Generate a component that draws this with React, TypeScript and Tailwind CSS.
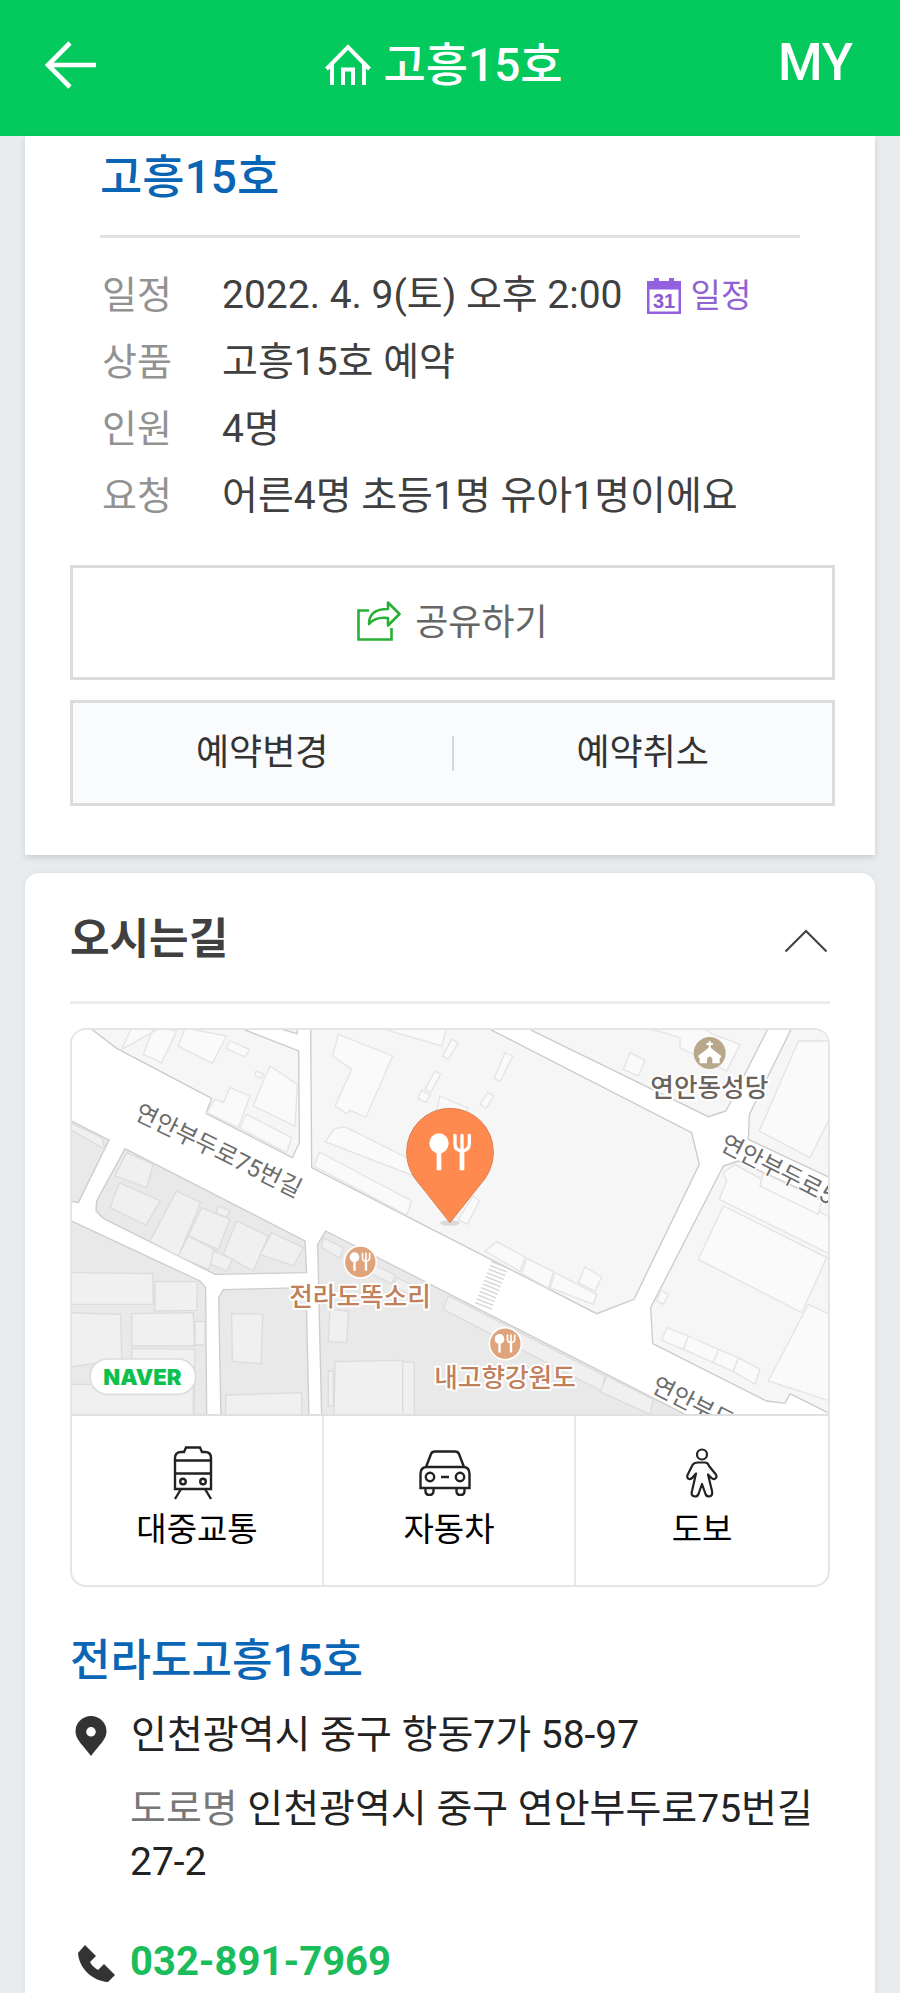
import type { ReactNode } from 'react';

interface DetailRowProps {
  label: string;
  children: ReactNode;
}

function DetailRow({ label, children }: DetailRowProps) {
  return (
    <div className="flex items-center leading-[67px]">
      <dt className="w-[122px] shrink-0 pl-[2px] text-[38px] text-[#929292]">{label}</dt>
      <dd className="flex items-center text-[39px] text-[#404040]">{children}</dd>
    </div>
  );
}

function BackIcon() {
  return (
    <svg viewBox="0 0 52 48" className="h-12 w-[52px]" fill="none" stroke="currentColor" strokeWidth="4.600">
      <path d="M3 24H51M25 2L3 24L25 46" />
    </svg>
  );
}

function HomeIcon() {
  return (
    <svg viewBox="0 0 46 42" className="h-[42px] w-[46px]" fill="none" stroke="currentColor" strokeWidth="4">
      <path d="M1.500 25L23 3L44.500 25M7 20V41M39 20V41M18 41V25.500H28V41" />
    </svg>
  );
}

function CalendarIcon() {
  return (
    <svg viewBox="0 0 34 36" className="h-9 w-[34px]">
      <path d="M0 3H7V0H12V3H22V0H27V3H34V36H0Z" fill="#9360e0" />
      <path d="M2.500 11.500H31.500V33.500H2.500Z" fill="#fff" />
      <text x="17" y="30" textAnchor="middle" fontFamily="Liberation Sans, sans-serif" fontSize="20" fontWeight="700" fill="#8a5ad0">
        31
      </text>
    </svg>
  );
}

function ShareIcon() {
  return (
    <svg viewBox="0 0 44 40" className="mb-1 h-10 w-11" fill="none" stroke="#27b035" strokeWidth="2.600">
      <path d="M12 9.500H1.500V38.500H34.500V27" />
      <path d="M12 23C12 13 18 8 31 8V1.500L42.500 13L31 24.500V17C22 16 16 18 12 23Z" strokeLinejoin="round" />
    </svg>
  );
}

function TrainIcon() {
  return (
    <svg viewBox="0 0 40 54" className="mr-2 h-[54px] w-10" fill="none" stroke="#222" strokeWidth="2.400">
      <path d="M2 43V12Q2 6 8 6H11L13 1.500H27L29 6H32Q38 6 38 12V43Z" />
      <path d="M2 14.500H38M2 27.500H38M8 43L2 53M32 43L38 53" />
      <circle cx="10" cy="35.500" r="2.800" />
      <circle cx="30" cy="35.500" r="2.800" />
    </svg>
  );
}

function CarIcon() {
  return (
    <svg viewBox="0 0 52 46" className="mr-2 h-[46px] w-[52px]" fill="none" stroke="#222" strokeWidth="2.400">
      <path d="M7 17L12 4Q13 1.500 16 1.500H36Q39 1.500 40 4L45 17" />
      <path d="M1.500 38V24Q1.500 17 8 17H44Q50.500 17 50.500 24V38Z" />
      <circle cx="11" cy="27" r="4.200" />
      <circle cx="41" cy="27" r="4.200" />
      <path d="M22 27H30M6.500 38V41Q6.500 45 10.500 45T14.500 41V38M37.500 38V41Q37.500 45 41.500 45T45.500 41V38" />
    </svg>
  );
}

function WalkIcon() {
  return (
    <svg viewBox="0 0 32 50" className="h-[50px] w-8" fill="none" stroke="#222" strokeWidth="2.200" strokeLinejoin="round">
      <circle cx="16" cy="6.500" r="5" />
      <path d="M12 14.500H19Q22 14.500 23 18L29.500 26Q32 29.500 28.500 31Q27 31.500 25.500 30L22 26.500L26 43Q27 48 23 48.500Q20.500 48.500 19.500 46L16 36L12.500 46Q11.500 48.500 9 48.500Q4.500 48 6 43L10 25.500L7 29Q5 31.500 3 31Q0.500 30 1.500 27L6.500 17Q8 14.500 12 14.500Z" />
    </svg>
  );
}

function PinIcon() {
  return (
    <svg viewBox="0 0 32 40" className="h-10 w-8" fill="#333">
      <path fillRule="evenodd" d="M16 0A15.500 15.500 0 0 1 31.500 15.500C31.500 24 23 30 16 40C9 30 .5 24 .5 15.500A15.500 15.500 0 0 1 16 0ZM16 11A4.800 4.800 0 1 0 16 20.600A4.800 4.800 0 1 0 16 11Z" />
    </svg>
  );
}

function PhoneIcon() {
  return (
    <svg viewBox="0 0 37 37" className="mt-1 h-[37px] w-[37px]" fill="#333">
      <path d="M0 8L7 0L18 11L12 17C14 21 17 23 20 25L26 19L37 30L30 37C14 36 1 23 0 8Z" />
    </svg>
  );
}

function Cutlery({ x, y, scale }: { x: number; y: number; scale: number }) {
  return (
    <g transform={`translate(${x} ${y}) scale(${scale})`} fill="none" stroke="#fff" strokeLinecap="round">
      <ellipse cx="-33" cy="-28" rx="29" ry="30" fill="#fff" stroke="none" />
      <path d="M-33 0V53" strokeWidth="14" strokeLinecap="butt" />
      <path d="M15 -52V-26Q15 -6 36 -6T58 -26V-52M36 -52V-6" strokeWidth="10" />
      <path d="M36 -10V53" strokeWidth="14" strokeLinecap="butt" />
    </g>
  );
}

const lots = [
  '90,21 170,82 455,232 438,277 697,410 718,365 716,90 540,21',
  '650,21 712,38 712,21',
  '752,21 755,440 1140,637 1610,878 1722,835 1918,430 1895,335 1282,21',
  '1400,21 1945,287 1998,270 2125,21',
  '2195,21 2068,280 2065,355 2310,470 2310,21',
  '2035,420 1990,435 1772,860 1778,968 2120,1140 2175,1147 2190,1118 2310,1178 2310,545',
];

const darkLots = [
  '30,298 147,357 55,545 30,540',
  '195,383 735,660 740,755 465,760 130,592 108,570 110,540',
  '30,598 420,780 437,800 440,1190 30,1190',
  '490,806 738,800 747,1190 483,1190 476,830',
  '797,630 1895,1190 785,1190 773,670',
];

const buildings = [
  '185,85 215,21 280,21 250,100 305,125 350,30 300,21',
  '355,75 375,21 500,45 457,127',
  '510,60 568,85 555,108 498,82',
  '510,200 570,225 535,320 440,275 465,235 490,245',
  '630,135 712,190 705,315 580,255 610,180',
  '560,280 695,350 680,395 540,322',
  '588,150 610,160 602,172 585,162',
  '835,40 998,105 918,288 870,268 860,278 825,255 875,145 818,105',
  '1125,150 1142,160 1112,215 1095,205',
  '1085,208 1110,222 1098,244 1073,232',
  '1175,55 1195,65 1165,115 1148,105',
  '1140,225 1225,262 1200,320 1125,290',
  '825,322 855,318 1100,440 1075,470 795,362',
  '778,393 1055,540 1040,582 762,435',
  '1335,95 1358,105 1320,182 1303,172',
  '1283,215 1302,225 1278,262 1260,250',
  '1240,525 1258,540 1222,610 1195,595',
  '1310,662 1395,708 1380,752 1275,690',
  '1400,712 1480,752 1465,802 1385,758',
  '1485,755 1610,820 1600,850 1470,800',
  '1575,738 1625,768 1605,810 1555,785',
  '1710,95 1755,118 1735,165 1690,145',
  '1765,21 1860,50 1860,80 2000,150 2040,70 1960,40 1930,21',
  '960,21 1145,75 1160,21',
  '2215,60 2098,330 2250,410 2310,290 2310,60',
  '2025,430 1990,455 2000,480 1978,535 2310,700 2310,590',
  '2110,455 2285,540 2275,580 2100,495',
  '1990,555 2300,710 2225,875 1915,715',
  '1803,808 1825,820 1810,850 1790,840',
  '1820,920 1885,945 1870,985 1805,958',
  '1885,945 1975,985 1960,1025 1870,985',
  '1975,985 2035,1010 2020,1052 1960,1025',
  '2035,1010 2100,1045 2085,1090 2020,1052',
  '2245,850 2310,880 2310,1140 2125,1080',
];

const darkBuildings = [
  '30,325 135,385 125,350 30,305',
  '178,485 300,540 258,612 150,560',
  '350,510 422,545 355,705 270,660',
  '425,560 510,595 475,685 385,645',
  '530,600 625,645 580,750 490,700',
  '635,635 730,680 700,735 600,700',
  '385,645 470,690 445,745 355,705',
  '460,690 518,715 500,750 452,730',
  '475,555 510,570 500,588 468,575',
  '200,395 280,430 260,500 165,465',
  '30,755 278,758 280,850 30,850',
  '285,782 412,782 410,868 285,870',
  '30,875 182,880 185,1015 30,1038',
  '215,878 400,875 403,975 215,975',
  '405,902 435,902 435,972 405,972',
  '215,982 405,985 402,1190 215,1190',
  '30,1090 400,1090 400,1190 30,1190',
  '515,878 608,880 603,1028 517,1022',
  '497,1122 725,1115 725,1190 497,1190',
  '790,650 850,680 840,712 785,680',
  '810,865 865,870 860,965 805,962',
  '825,1022 1028,1018 1028,1190 822,1190',
  '1028,1022 1063,1024 1063,1190 1028,1190',
  '805,1050 820,1050 820,1155 805,1155',
  '950,735 1005,762 995,788 935,760',
  '1010,770 1085,805 1075,835 1000,795',
  '1165,825 1635,1065 1625,1110 1150,865',
  '1640,1065 1780,1135 1770,1180 1620,1112',
];

function DirectionsMap() {
  return (
    <svg
      viewBox="36 27 2268 1152"
      className="block h-auto w-full bg-white"
      role="img"
      aria-label="전라도고흥15호 위치 지도"
      fontFamily="Roboto, 'Noto Sans CJK KR', sans-serif"
    >
      <g fill="#f6f6f6" stroke="#cbcbcb" strokeWidth="4">
        {lots.map((points) => <polygon key={points} points={points} />)}
      </g>
      <g fill="#e9e9e9" stroke="#cfcdca" strokeWidth="4">
        {darkLots.map((points) => <polygon key={points} points={points} />)}
      </g>
      <g fill="#fafafa" stroke="#e4e4e4" strokeWidth="4">
        {buildings.map((points) => <polygon key={points} points={points} />)}
      </g>
      <g fill="#f0f0f0" stroke="#dcdcdc" strokeWidth="4">
        {darkBuildings.map((points) => <polygon key={points} points={points} />)}
      </g>

      {/* crosswalk */}
      <path d="M1320 730L1268 862" stroke="#d4d4d4" strokeWidth="54" strokeDasharray="4 8" />

      <g fontSize="72" fill="#6c6c6c" stroke="#fff" strokeWidth="8" paintOrder="stroke" strokeLinejoin="round">
        <text transform="translate(220 292) rotate(26)">연안부두로75번길</text>
        <text transform="translate(1976 384) rotate(27)">연안부두로5</text>
        <text transform="translate(1770 1110) rotate(27)">연안부두</text>
      </g>

      <g fontSize="77" fontWeight="500" stroke="#fff" strokeWidth="12" paintOrder="stroke" strokeLinejoin="round" textAnchor="middle">
        <text x="900" y="854" fill="#c0805a">전라도똑소리</text>
        <text x="1335" y="1099" fill="#c0805a">내고향강원도</text>
        <text x="1948" y="228" fill="#6b635c">연안동성당</text>
      </g>

      <circle cx="901" cy="723" r="48" fill="#e0a47c" stroke="#fff" strokeWidth="5" />
      <Cutlery x={900} y={723} scale={0.5} />
      <circle cx="1336" cy="968" r="48" fill="#e0a47c" stroke="#fff" strokeWidth="5" />
      <Cutlery x={1335} y={968} scale={0.5} />

      <circle cx="1949" cy="96" r="48" fill="#b8a78a" />
      <path d="M1949 60V86M1939 69H1959" stroke="#fff" strokeWidth="6" />
      <path d="M1949 78L1983 104V110H1979V127H1957V113Q1949 100 1941 113V127H1919V110H1915V104Z" fill="#fff" />

      <ellipse cx="1170" cy="606" rx="30" ry="8" fill="#dadada" />
      <path
        d="M1170 262A130 130 0 0 1 1300 392C1300 425 1290 450 1274 474L1170 605L1066 474C1050 450 1040 425 1040 392A130 130 0 0 1 1170 262Z"
        fill="#ff8a50"
        stroke="#d98052"
        strokeWidth="3"
      />
      <Cutlery x={1170} y={395} scale={1} />

      <rect x="90" y="1014" width="317" height="106" rx="53" fill="#fff" stroke="#dcdce0" strokeWidth="5" />
      <text x="247" y="1091" textAnchor="middle" fontFamily="Inter, sans-serif" fontSize="66" fontWeight="900" fill="#0cc04c">
        NAVER
      </text>
    </svg>
  );
}

const transports = [
  { label: '대중교통', icon: <TrainIcon /> },
  { label: '자동차', icon: <CarIcon /> },
  { label: '도보', icon: <WalkIcon /> },
];

export default function App() {
  return (
    <div className="min-h-screen bg-[#e8ecef] font-[Roboto,'Noto_Sans_CJK_KR',sans-serif]">
      <header className="flex h-[136px] items-center justify-between bg-[#04c95c] px-[45px] pb-[6px] text-white">
        <button type="button" aria-label="뒤로" className="w-[80px]">
          <BackIcon />
        </button>
        <h1 className="flex items-center gap-3 pr-3 text-[46px] leading-[56px] font-medium">
          <HomeIcon />
          고흥15호
        </h1>
        <a href="#my" className="w-[80px] pr-[2px] pb-1 text-right text-[51px] leading-[56px] font-medium">MY</a>
      </header>

      <main className="flex flex-col gap-[18px] px-[25px]">
        <section className="bg-white pr-10 pb-[49px] pl-[45px] shadow-[0_3px_6px_rgba(0,0,0,0.12)]">
          <div className="pr-[35px] pl-[30px]">
            <h2 className="border-b-[3px] border-[#e2e2e2] pt-[14px] pb-[30px] text-[46px] leading-[55px] font-medium text-[#0a66b5]">
              고흥15호
            </h2>
            <dl className="pt-6">
              <DetailRow label="일정">
                2022. 4. 9(토) 오후 2:00
                <button type="button" className="ml-6 flex items-center gap-[10px] text-[33px] text-[#8f63d2]">
                  <CalendarIcon />
                  일정
                </button>
              </DetailRow>
              <DetailRow label="상품">고흥15호 예약</DetailRow>
              <DetailRow label="인원">4명</DetailRow>
              <DetailRow label="요청">어른4명 초등1명 유아1명이에요</DetailRow>
            </dl>
          </div>

          <button
            type="button"
            className="mt-[35px] flex h-[115px] w-full items-center justify-center gap-[14px] border-[3px] border-[#dadcde] text-[36px] text-[#666]"
          >
            <ShareIcon />
            공유하기
          </button>
          <div className="mt-5 flex h-[106px] items-center border-[3px] border-[#dadcde] bg-[#fafbfd] text-[36px] text-[#333]">
            <button type="button" className="h-full flex-1">예약변경</button>
            <span className="h-[35px] w-[2px] bg-[#d5d7da]" />
            <button type="button" className="h-full flex-1">예약취소</button>
          </div>
        </section>

        <section className="rounded-t-[14px] bg-white px-[45px] pb-2 shadow-[0_0_6px_rgba(0,0,0,0.06)]">
          <div className="flex items-center justify-between border-b-[3px] border-[#ebebeb] pt-[38px] pb-[34px]">
            <h2 className="text-[43px] leading-[56px] font-bold text-[#404040]">오시는길</h2>
            <button type="button" aria-label="접기" className="pt-1 pr-[2px]">
              <svg viewBox="0 0 44 24" className="h-6 w-11" fill="none" stroke="#444" strokeWidth="2.200">
                <path d="M1.500 22.500L22 2L42.500 22.500" />
              </svg>
            </button>
          </div>

          <div className="mt-6 overflow-hidden rounded-[16px] border-2 border-[#e5e5e5]">
            <DirectionsMap />
            <div className="grid grid-cols-3 divide-x-2 divide-[#e8e8e8] border-t-2 border-[#e0e0e0]">
              {transports.map(({ label, icon }) => (
                <button
                  key={label}
                  type="button"
                  className="flex h-[169px] flex-col items-center pt-[30px] text-[33px] leading-[48px] text-black"
                >
                  <span className="flex h-[54px] items-center">{icon}</span>
                  <span className="mt-[6px]">{label}</span>
                </button>
              ))}
            </div>
          </div>

          <h3 className="mt-[46px] text-[44px] leading-[56px] font-medium text-[#0a66b5]">전라도고흥15호</h3>
          <address className="text-[39px] leading-[53px] text-[#222] not-italic">
            <div className="mt-5 flex items-center gap-6 pl-[5px]">
              <PinIcon />
              <p>인천광역시 중구 항동7가 58-97</p>
            </div>
            <p className="mt-[21px] pl-[60px]">
              <span className="text-[#777]">도로명</span> 인천광역시 중구 연안부두로75번길 27-2
            </p>
            <div className="mt-[46px] flex items-center gap-[15px] pl-2">
              <PhoneIcon />
              <a href="tel:032-891-7969" className="text-[40px] font-bold text-[#1abc5c]">032-891-7969</a>
            </div>
          </address>
        </section>
      </main>
    </div>
  );
}
